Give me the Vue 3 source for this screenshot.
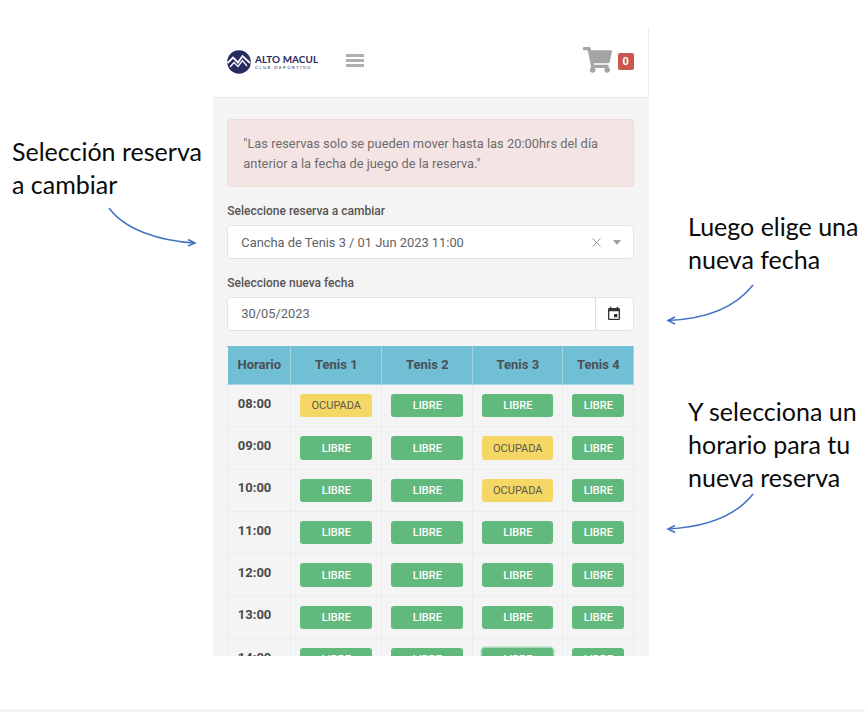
<script setup>
const rows = [
  { t: '08:00', s: [1, 0, 0, 0] },
  { t: '09:00', s: [0, 0, 1, 0] },
  { t: '10:00', s: [0, 0, 1, 0] },
  { t: '11:00', s: [0, 0, 0, 0] },
  { t: '12:00', s: [0, 0, 0, 0] },
  { t: '13:00', s: [0, 0, 0, 0] },
  { t: '14:00', s: [0, 0, 0, 0], focus: 2 }
]
</script>

<template>
  <div class="page">
    <div class="panel">
      <header class="top">
        <div class="logo">
          <svg class="mark" viewBox="0 0 24 24" width="24" height="24">
            <circle cx="12" cy="12" r="11.8" fill="#262b5e" />
            <path d="M0.5 13 L6 7.5 L11 12.5 L15.5 6 L23 13" fill="none" stroke="#fff" stroke-width="1.8" />
            <path d="M3 17 L7 12.5 L11 16.5 L15.5 10.5 L20 16" fill="none" stroke="#fff" stroke-width="1.3" />
          </svg>
          <div class="brand">
            <div class="b1">ALTO MACUL</div>
            <div class="b2">CLUB DEPORTIVO</div>
          </div>
        </div>
        <div class="burger"><i></i><i></i><i></i></div>
        <div class="cart">
          <svg class="cart-icon" viewBox="0 0 576 512" width="29" height="26">
            <path fill="#a4a4a6" d="M528.12 301.319l47.273-208C578.806 78.301 567.391 64 551.99 64H159.208l-9.166-44.81C147.758 8.021 137.93 0 126.529 0H24C10.745 0 0 10.745 0 24v16c0 13.255 10.745 24 24 24h69.883l70.248 343.435C147.325 417.1 136 435.222 136 456c0 30.928 25.072 56 56 56s56-25.072 56-56c0-15.674-6.447-29.835-16.824-40h209.647C430.447 426.165 424 440.326 424 456c0 30.928 25.072 56 56 56s56-25.072 56-56c0-22.172-12.888-41.332-31.579-50.405l5.517-24.276c3.413-15.018-8.002-29.319-23.403-29.319H218.117l-6.545-32h293.145c11.206 0 20.92-7.754 23.403-18.681z" />
          </svg>
          <span class="badge">0</span>
        </div>
      </header>
      <main class="body">
        <div class="alert">"Las reservas solo se pueden mover hasta las 20:00hrs del día anterior a la fecha de juego de la reserva."</div>
        <label class="lbl first">Seleccione reserva a cambiar</label>
        <div class="field select">
          <span class="val">Cancha de Tenis 3 / 01 Jun 2023 11:00</span>
          <svg class="x" viewBox="0 0 10 10" width="9" height="9"><path d="M0.5 0.5 L9.5 9.5 M9.5 0.5 L0.5 9.5" stroke="#9a9a9a" stroke-width="1.1" /></svg>
          <span class="caret"></span>
        </div>
        <label class="lbl second">Seleccione nueva fecha</label>
        <div class="field date">
          <span class="val">30/05/2023</span>
          <span class="addon">
            <svg viewBox="0 0 24 24" width="16" height="16"><path fill="#2f3438" d="M17 12h-5v5h5v-5zM16 1v2H8V1H6v2H5c-1.11 0-1.99.9-1.99 2L3 19c0 1.1.89 2 2 2h14c1.1 0 2-.9 2-2V5c0-1.1-.9-2-2-2h-1V1h-2zm3 18H5V8h14v11z" /></svg>
          </span>
        </div>
        <table class="grid">
          <colgroup>
            <col class="c0" /><col class="c1" /><col class="c2" /><col class="c3" /><col class="c4" />
          </colgroup>
          <thead>
            <tr>
              <th>Horario</th><th>Tenis 1</th><th>Tenis 2</th><th>Tenis 3</th><th>Tenis 4</th>
            </tr>
          </thead>
          <tbody>
            <tr v-for="r in rows" :key="r.t">
              <td class="time">{{ r.t }}</td>
              <td v-for="(v, i) in r.s" :key="i">
                <button class="slot" :class="{ busy: v, focus: r.focus === i }">{{ v ? 'OCUPADA' : 'LIBRE' }}</button>
              </td>
            </tr>
          </tbody>
        </table>
      </main>
    </div>

    <div class="note n1">Selección reserva<br />a cambiar</div>
    <div class="note n2">Luego elige una<br />nueva fecha</div>
    <div class="note n3">Y selecciona un<br />horario para tu<br />nueva reserva</div>

    <svg class="arrows" viewBox="0 0 865 712" width="865" height="712">
      <g fill="none" stroke="#4472c4" stroke-width="1.5">
        <path d="M109 208 C125 230 160 241 195 243" />
        <path d="M188 239.5 L195 243 L188 246" />
        <path d="M753 285 C735 308 705 319 668 320.5" />
        <path d="M675 317 L668 320.5 L675 324" />
        <path d="M753 494 C735 517 705 527 668 529" />
        <path d="M675 525.5 L668 529 L675 532.5" />
      </g>
    </svg>
    <div class="foot"></div>
  </div>
</template>

<style>
html, body { margin: 0; background: #fff; }
</style>

<style scoped>
.page {
  position: relative;
  width: 865px;
  height: 712px;
  overflow: hidden;
  background: #fff;
  font-family: Roboto, "Liberation Sans", sans-serif;
}
.panel {
  margin: 27px 0 0 213px;
  width: 436px;
  height: 629px;
  overflow: hidden;
  background: #f4f4f4;
}
.top {
  height: 71px;
  box-sizing: border-box;
  background: #fff;
  border-bottom: 1px solid #e4e4e4;
  border-right: 1px solid #eee;
  display: flex;
  align-items: center;
  padding: 0 14.5px 0 14px;
}
.logo { display: flex; align-items: center; gap: 4px; width: 119px; margin-top: -1px; }
.mark { flex: none; }
.brand { color: #262b5e; font-family: Lato, sans-serif; line-height: 1; margin-top: 2px; }
.b1 { font-size: 9.9px; font-weight: 700; white-space: nowrap; letter-spacing: 0.1px; }
.b2 { font-size: 4.4px; letter-spacing: 1.42px; margin-top: 1.5px; white-space: nowrap; }
.burger { display: flex; flex-direction: column; gap: 2.5px; width: 18px; margin-top: -3px; }
.burger i { display: block; height: 2.5px; background: #b0b0b0; }
.cart { margin-left: auto; display: flex; align-items: center; gap: 6px; margin-top: -1px; }
.cart-icon { margin-top: -3px; }
.badge {
  width: 15.5px;
  height: 17px;
  line-height: 17px;
  text-align: center;
  background: #c9574e;
  color: #fff;
  font-size: 11px;
  font-weight: 700;
  border-radius: 2px;
}
.body { padding: 21px 15.5px 0 14.3px; }
.alert {
  box-sizing: border-box;
  height: 68px;
  padding: 14px 15px 0;
  background: #f4e5e4;
  border: 1px solid #eed9d7;
  border-radius: 4px;
  color: #6e6b6c;
  font-size: 12.87px;
  line-height: 19.5px;
}
.lbl { display: block; font-size: 12px; font-weight: 500; color: #555; line-height: 14px; }
.first { margin-top: 17px; }
.second { margin-top: 17px; }
.field {
  box-sizing: border-box;
  height: 34px;
  margin-top: 7px;
  display: flex;
  align-items: center;
  background: #fff;
  border: 1px solid #e4e4e4;
  border-radius: 4px;
  color: #5f6368;
  font-size: 12.87px;
}
.date { margin-top: 6.5px; }
.val { padding-left: 13px; flex: 1; }
.select .x { margin-right: 12px; }
.caret {
  width: 0;
  height: 0;
  border-left: 4px solid transparent;
  border-right: 4px solid transparent;
  border-top: 5px solid #a0a0a0;
  margin-right: 12px;
}
.addon {
  width: 36.5px;
  height: 100%;
  border-left: 1px solid #dedede;
  display: flex;
  align-items: center;
  justify-content: center;
}
.grid {
  width: 406px;
  margin-top: 15.5px;
  table-layout: fixed;
  border-collapse: collapse;
}
.c0 { width: 63px; }
.c1, .c2 { width: 91px; }
.c3 { width: 90px; }
.c4 { width: 71px; }
th {
  height: 38px;
  padding: 0 0 3px;
  box-sizing: border-box;
  background: #70bfd5;
  border: 1px solid #a5d4e2;
  border-top-color: #70bfd5;
  border-left-color: #f4f4f4;
  color: #4a4f55;
  font-size: 13px;
  font-weight: 700;
}
th + th { border-left-color: #a5d4e2; }
td {
  height: 42.35px;
  box-sizing: border-box;
  padding: 0;
  border: 1px solid #ececec;
  text-align: center;
  vertical-align: middle;
}
.time {
  text-align: left;
  padding: 0 0 5px 9.5px;
  color: #4a4a4a;
  font-size: 13px;
  font-weight: 700;
}
.slot {
  display: block;
  box-sizing: border-box;
  width: calc(100% - 18px);
  height: 23.5px;
  margin: 0 auto;
  padding: 0;
  border: 0;
  border-radius: 3px;
  background: #62b97d;
  color: #fff;
  font-family: inherit;
  font-size: 11px;
  font-weight: 500;
}
.slot.busy { background: #f5d766; color: #5b5a48; font-weight: 400; }
.slot.focus { box-shadow: 0 0 0 1.5px #a9d9b8; }
.note {
  position: absolute;
  font-family: Lato, "Open Sans", sans-serif;
  font-size: 25px;
  line-height: 33px;
  color: #0a0a0a;
  white-space: nowrap;
}
.n1 { left: 12px; top: 135px; }
.n2 { left: 688px; top: 210px; }
.n3 { left: 688px; top: 395px; }
.arrows { position: absolute; left: 0; top: 0; pointer-events: none; }
.foot { position: absolute; left: 0; right: 0; bottom: 0; height: 3px; background: #f4f4f4; }
</style>
